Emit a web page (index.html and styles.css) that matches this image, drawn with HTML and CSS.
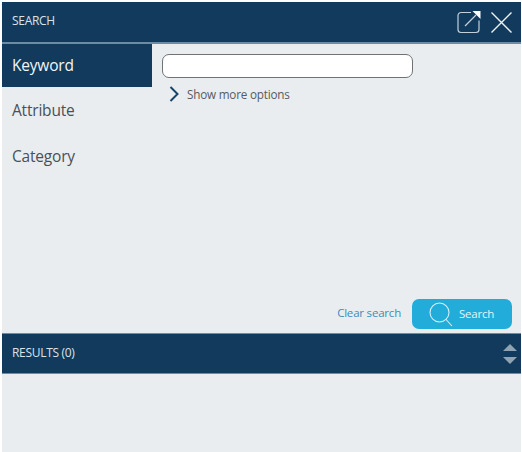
FILE: index.html
```html
<!DOCTYPE html>
<html lang="en">
<head>
    <meta charset="UTF-8">
    <title>Search</title>
    <link rel="stylesheet" href="styles.css">
</head>
<body>
    <div class="panel">
        <div class="bar search-bar">
            <span class="bar-title">SEARCH</span>
            <div class="bar-icons">
                <svg width="24" height="24" viewBox="0 0 24 24" fill="none" stroke="#c3d0da" stroke-width="1.2">
                    <path d="M14 2.5H4a3 3 0 0 0-3 3v14a3 3 0 0 0 3 3h15a3 3 0 0 0 3-3v-9"/>
                    <path d="M8 16 19 5"/>
                    <path d="M15.5 1H23.5V9Z" fill="#fff" stroke="none"/>
                </svg>
                <svg width="21" height="21" viewBox="0 0 21 21" fill="none" stroke="#eef2f5" stroke-width="1.4">
                    <path d="M.5.5 20.5 20.5M20.5.5 .5 20.5"/>
                </svg>
            </div>
        </div>
        <div class="search-body">
            <ul class="tabs">
                <li class="tab active">Keyword</li>
                <li class="tab">Attribute</li>
                <li class="tab">Category</li>
            </ul>
            <div class="search-main">
                <div class="search-fields">
                    <input type="text" class="keyword-input">
                    <div class="more-options">
                        <svg width="10" height="16" viewBox="0 0 10 16" fill="none" stroke="#17436b" stroke-width="2">
                            <path d="M1.5 1 8.5 8 1.5 15"/>
                        </svg>
                        <span>Show more options</span>
                    </div>
                </div>
                <div class="search-actions">
                    <a class="clear-link">Clear search</a>
                    <button class="search-btn">
                        <svg width="24" height="26" viewBox="0 0 24 26" fill="none" stroke="#d5eef7" stroke-width="1.1">
                            <circle cx="10.5" cy="10.5" r="9.5"/>
                            <path d="M17 17.5 23 24"/>
                        </svg>
                        <span>Search</span>
                    </button>
                </div>
            </div>
        </div>
        <div class="bar results-bar">
            <span class="bar-title">RESULTS (0)</span>
            <div class="sort-arrows">
                <span class="arrow-up"></span>
                <span class="arrow-down"></span>
            </div>
        </div>
        <div class="results-body"></div>
    </div>
</body>
</html>
```

FILE: styles.css
```css
html, body {
    margin: 0;
    padding: 0;
    background: #fff;
}
body {
    font-family: "Open Sans", "Noto Sans", sans-serif;
    width: 522px;
    height: 452px;
    overflow: hidden;
}
.panel {
    display: flex;
    flex-direction: column;
    height: 450px;
    margin: 2px 1px 0 2px;
    background: #e9edf0;
}
.bar {
    display: flex;
    align-items: center;
    justify-content: space-between;
    flex-shrink: 0;
    box-sizing: border-box;
    height: 42px;
    background: #113a5c;
    border-bottom: 2px solid #6d8ba3;
    color: #dbe3e9;
}
.bar-title {
    padding-left: 10px;
    padding-bottom: 4px;
    font-size: 12px;
    letter-spacing: -0.3px;
}
.results-bar .bar-title {
    padding-bottom: 2px;
}
.bar-icons {
    display: flex;
    align-items: center;
    gap: 10px;
    padding-right: 9px;
}
.search-body {
    display: flex;
    flex: 1;
}
.tabs {
    list-style: none;
    margin: 0;
    padding: 0;
    width: 150px;
}
.tab {
    height: 45.5px;
    padding-left: 10px;
    font-size: 15.5px;
    line-height: 43px;
    letter-spacing: -0.2px;
    color: #4a5056;
}
.tab.active {
    height: 43px;
    margin-bottom: 2px;
    background: #113a5c;
    color: #f2f5f7;
}
.search-main {
    display: flex;
    flex: 1;
    flex-direction: column;
    justify-content: space-between;
    padding: 10px 9px 4px 10px;
}
.keyword-input {
    display: block;
    box-sizing: border-box;
    width: 251px;
    height: 24px;
    background: #fff;
    border: 1px solid #6e7377;
    border-radius: 7px;
}
.more-options {
    display: flex;
    align-items: center;
    gap: 8px;
    margin-top: 8px;
    padding-left: 7px;
    font-size: 11.7px;
    line-height: 14px;
    letter-spacing: -0.2px;
    color: #555b61;
}
.search-actions {
    display: flex;
    align-items: center;
    justify-content: flex-end;
    gap: 11px;
}
.clear-link {
    padding-bottom: 3px;
    font-size: 11.5px;
    letter-spacing: -0.2px;
    color: #3d8db5;
}
.search-btn {
    display: flex;
    align-items: center;
    gap: 6px;
    box-sizing: border-box;
    width: 100px;
    height: 30px;
    padding: 2px 0 0 17px;
    background: #22acd9;
    border: none;
    border-radius: 7px;
    font-family: inherit;
    font-size: 11.5px;
    letter-spacing: -0.2px;
    color: #e4f4fa;
}
.search-btn span {
    padding-bottom: 4px;
}
.results-bar {
    height: 41px;
    border-top: 1px solid #6d8ba3;
    border-bottom: 1px solid #6d8ba3;
}
.sort-arrows {
    display: flex;
    flex-direction: column;
    gap: 6px;
    padding-right: 4px;
}
.arrow-up, .arrow-down {
    width: 0;
    height: 0;
    border-left: 7px solid transparent;
    border-right: 7px solid transparent;
}
.arrow-up {
    border-bottom: 7px solid #8fa3b2;
}
.arrow-down {
    border-top: 7px solid #8fa3b2;
}
.results-body {
    height: 77px;
    margin-top: 1px;
    background: #e9edf0;
}
```
